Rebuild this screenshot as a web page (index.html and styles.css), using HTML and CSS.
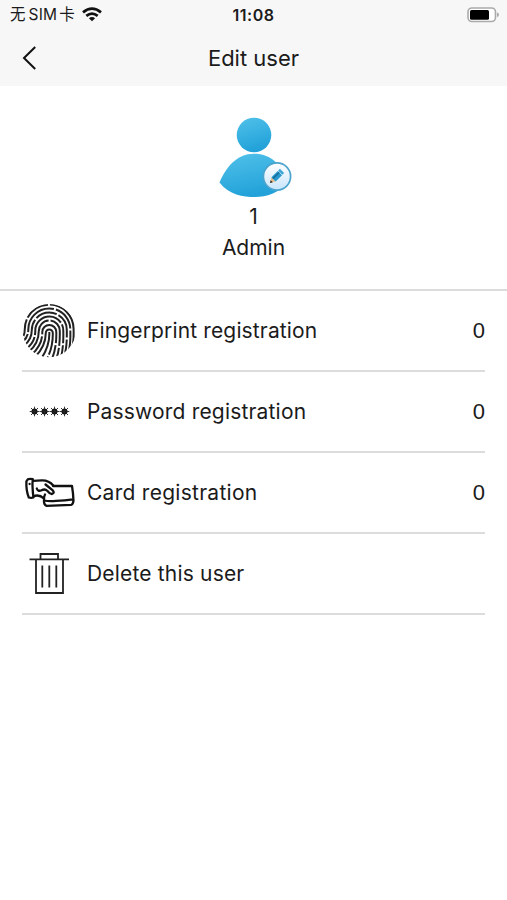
FILE: index.html
```html
<!DOCTYPE html>
<html lang="en">
<head>
<meta charset="utf-8">
<title>Edit user</title>
<link rel="stylesheet" href="styles.css">
</head>
<body>
<header class="top">
  <div class="status">
    <div class="carrier"><span class="carrier-name">无<span class="sim">SIM</span>卡</span>
      <svg class="wifi" viewBox="0 0 20 15"><g fill="none" stroke="#111" stroke-width="2.7"><path d="M1 5.4Q10-2.1 19 5.4M4.3 8.9Q10 4.2 15.7 8.9"/></g><path d="M6.9 11.2Q10 8.6 13.1 11.2L10 14.3Z" fill="#111"/></svg>
    </div>
    <time class="clock">11:08</time>
    <svg class="battery" viewBox="0 0 33 16"><rect x="1" y="1" width="27.5" height="13.5" rx="4" fill="#fff" stroke="#aaa" stroke-width="1.6"/><rect x="3" y="3" width="19" height="9.8" rx="1.5" fill="#000"/><path d="M30 5.5Q32 6 32 7.8T30 10Z" fill="#aaa"/></svg>
  </div>
  <nav class="bar">
    <svg class="back" viewBox="0 0 16 26"><path d="M13.2 2 2 13 13.2 24" fill="none" stroke="#111" stroke-width="2"/></svg>
    <h1>Edit user</h1>
  </nav>
</header>
<main>
  <section class="profile">
    <svg class="avatar" viewBox="0 0 76 84">
      <defs>
        <linearGradient id="blue" x1="0" y1="0" x2=".3" y2="1"><stop offset="0" stop-color="#51c1ea"/><stop offset="1" stop-color="#22a2d9"/></linearGradient>
        <linearGradient id="badge" x1="0" y1="0" x2="0" y2="1"><stop offset="0" stop-color="#fff"/><stop offset="1" stop-color="#c9e5fb"/></linearGradient>
      </defs>
      <circle cx="36" cy="20" r="17.3" fill="url(#blue)"/>
      <path d="M1.5 67.5C8 52 19 38.8 36 38.8S63 49 70 67.5C60 78 49 82 37 82S11 80 1.5 67.5Z" fill="url(#blue)"/>
      <circle cx="59" cy="61.5" r="13.6" fill="url(#badge)" stroke="#4ba4cd" stroke-width="1.7"/>
      <g transform="translate(52 68) rotate(-45)"><path d="M0 0 5-3V3Z" fill="#e3bd8c"/><path d="M0 0 2.4-1.5V1.5Z" fill="#222"/><path d="M5-3H14V3H5Z" fill="#2498ce"/><path d="M5-1H14" stroke="#17668f" stroke-width="1.3"/><path d="M14.5-3H17V3H14.5Z" fill="#3aa6d8"/></g>
    </svg>
    <p class="uid">1</p>
    <p class="role">Admin</p>
  </section>
  <ul class="list">
    <li>
      <svg class="icon" viewBox="0 0 54 54">
        <defs><clipPath id="print"><circle cx="27.2" cy="26.6" r="26.6"/></clipPath></defs>
        <g clip-path="url(#print)" fill="none" stroke="#222" stroke-width="2">
          <path d="M27.3 28C27.8 38 25 46 19 55"/>
          <path d="M13 53C20 46 23.8 39 23.8 29A3.5 3.5 0 0 1 30.8 29C31 39 29 47 24.5 56" stroke-dasharray="60 2 60"/>
          <path d="M9.5 51C17 44 20.3 38 20.3 28A7 7 0 0 1 34.3 28C34.5 39 33 48 29.5 56" stroke-dasharray="22 2 35 2 60"/>
          <path d="M6.5 48C14 42 16.8 36 16.8 27A10.5 10.5 0 0 1 37.8 27C38 38 37 48 34 56" stroke-dasharray="40 2 30 2 60"/>
          <path d="M4 45C11 40 13.3 34 13.3 26.5A14 14 0 0 1 41.3 26.5C41.5 37 41 47 38.5 55" stroke-dasharray="15 2 40 2 19 2 60"/>
          <path d="M2 41.5C8 37 9.8 32 9.8 26A17.5 17.5 0 0 1 44.8 26C45 36 44.5 45 42.5 51" stroke-dasharray="29 2 22 2 25 2 60"/>
          <path d="M1 37.5C5 34 6.3 30 6.3 25.5A21 21 0 0 1 48.3 25.5C48.6 34 48.3 42 46.5 48" stroke-dasharray="9 2 40 2 25 2 60"/>
          <path d="M1.5 32C2.7 29.5 2.8 27 2.8 25A24.4 24.4 0 0 1 51.6 25C51.8 32 51.5 38 50.5 42" stroke-dasharray="17 2 25 2 60"/>
        </g>
      </svg>
      <span class="label l1">Fingerprint registration</span><span class="count">0</span>
    </li>
    <li>
      <svg class="icon" viewBox="0 0 54 54">
        <defs><g id="star"><circle r="3" fill="#111"/><path d="M0-4.8V4.8M-4.8 0H4.8M-3.5-3.5 3.5 3.5M3.5-3.5-3.5 3.5" stroke="#222" stroke-width=".9"/></g></defs>
        <use href="#star" x="12.5" y="26.5"/><use href="#star" x="22.5" y="26.5"/><use href="#star" x="32.5" y="26.5"/><use href="#star" x="42.5" y="26.5"/>
      </svg>
      <span class="label l2">Password registration</span><span class="count">0</span>
    </li>
    <li>
      <svg class="icon" viewBox="0 0 54 54">
        <g fill="none" stroke="#111" stroke-width="2.3" stroke-linejoin="round" stroke-linecap="round">
          <path d="M5.8 13.3Q7.5 12.4 10.8 13.2Q10.2 18 10.6 22Q10.8 27 11.5 31.5Q9 32.3 6.8 31.5Q4 25 4.4 15.3Z"/>
          <path d="M7.6 17.8V18M11 14.8 20 14.4Q27 14.3 31.2 19.5M11.5 30.3Q17 28 22 32.5M14.8 22.5Q15.8 25.8 19.5 24.3Q23 22.5 25.5 25Q28 28.2 30 28Q33 27 30.8 24.4L23.5 18.5"/>
          <path d="M31 20 50 20Q51.2 27 51.5 34.7Q51 38.6 49 38.8L24.3 39.8Q21.5 38.5 22 34.5Q27 35.6 34 34.9Q43 34.6 51 33.3M22 34.5Q21.5 31 23 28.5"/>
        </g>
      </svg>
      <span class="label l3">Card registration</span><span class="count">0</span>
    </li>
    <li>
      <svg class="icon" viewBox="0 0 54 54">
        <path d="M7.5 12.4H47M18.5 12.4V7H36V12.4M14 12.4V46H41V12.4M20.3 18.5V40.5M27.3 18.5V40.5M34.3 18.5V40.5" fill="none" stroke="#222" stroke-width="1.8"/>
      </svg>
      <span class="label l4">Delete this user</span>
    </li>
  </ul>
</main>
</body>
</html>
```
FILE: styles.css
```css
* { box-sizing: border-box; }
body { margin: 0; background: #fff; color: #1b1b1b; font-family: Inter, "Noto Sans CJK SC", sans-serif; }
h1, p, ul { margin: 0; padding: 0; }
svg { display: block; flex: none; }
.top { height: 86px; background: #f7f7f7; }
.status { display: grid; grid-template-columns: 1fr auto 1fr; align-items: center; height: 29px; padding: 0 7px 0 10px; }
.carrier { display: flex; align-items: center; gap: 7px; font: 15.5px/20px Inter, "Noto Sans CJK SC", sans-serif; }
.carrier-name { white-space: nowrap; }
.sim { margin: 0 2px 0 3px; letter-spacing: .2px; }
.wifi { width: 20px; height: 15px; }
.clock { margin-right: 3px; font-size: 16px; font-weight: 600; line-height: 20px; letter-spacing: .5px; }
.battery { width: 33px; height: 16px; justify-self: end; }
.bar { display: grid; grid-template-columns: 40px 1fr 40px; align-items: center; height: 57px; padding: 0 20px; }
.back { width: 16px; height: 26px; margin: 1px 0 0 2px; }
h1 { font-size: 22px; font-weight: 400; line-height: 30px; text-align: center; }
.profile { display: flex; flex-direction: column; align-items: center; height: 205px; padding-top: 29px; border-bottom: 2px solid #dcdcdc; }
.avatar { width: 76px; height: 84px; margin-left: 4px; }
.uid, .role { font-size: 21px; line-height: 31px; }
.uid { margin-top: 2px; }
.list { list-style: none; padding: 0 22px; }
.list li { display: flex; align-items: center; height: 81px; border-bottom: 2px solid #dcdcdc; }
.icon { width: 54px; height: 54px; }
.label { margin-left: 11px; font-size: 21px; line-height: 30px; white-space: nowrap; }
.l1 { letter-spacing: .14px; }
.l2 { letter-spacing: .18px; }
.l3 { letter-spacing: .27px; }
.l4 { letter-spacing: .18px; }
.count { margin-left: auto; font: 22px/30px "Liberation Sans", sans-serif; }
```
